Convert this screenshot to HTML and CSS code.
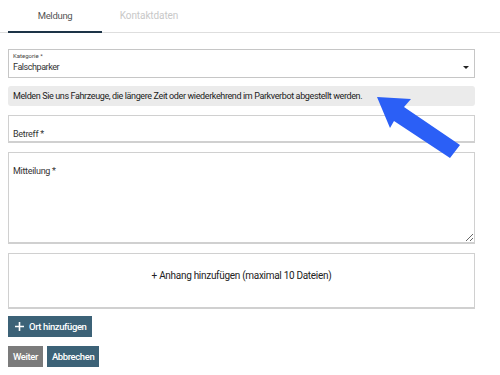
FILE: index.html
```html
<!DOCTYPE html>
<html lang="de">
<head>
<meta charset="utf-8">
<link rel="stylesheet" href="styles.css">
</head>
<body>
<div class="tabs">
  <div class="tab active">Meldung</div>
  <div class="tab disabled">Kontaktdaten</div>
</div>
<form class="form">
  <div class="select">
    <div class="select-label">Kategorie *</div>
    <div class="select-value">Falschparker</div>
    <span class="caret"></span>
  </div>
  <div class="info">Melden Sie uns Fahrzeuge, die längere Zeit oder wiederkehrend im Parkverbot abgestellt werden.</div>
  <div class="field"><span class="field-label">Betreff *</span></div>
  <textarea class="textarea" placeholder="Mitteilung *"></textarea>
  <div class="attach">+ Anhang hinzufügen (maximal 10 Dateien)</div>
  <div class="row row-ort">
    <button type="button" class="btn btn-primary btn-icon"><svg class="plus" width="9" height="9" viewBox="0 0 9 9"><path d="M4.5 0V9M0 4.5H9" stroke="#fff" stroke-width="1.6"/></svg>Ort hinzufügen</button>
  </div>
  <div class="row">
    <button type="button" class="btn btn-grey">Weiter</button>
    <button type="button" class="btn btn-primary">Abbrechen</button>
  </div>
</form>
<svg class="arrow" width="500" height="375" viewBox="0 0 500 375">
  <polygon points="377,97 411,99 404,107 460,145 450,158 394,121 390,128" fill="#2b5ff6"/>
</svg>
</body>
</html>
```

FILE: styles.css
```css
* { box-sizing: border-box; }
html, body { margin: 0; padding: 0; background: #fff; }
body {
  font-family: Roboto, "Liberation Sans", Arial, sans-serif;
  color: #333;
  width: 500px;
  height: 375px;
  overflow: hidden;
  position: relative;
}
.tabs {
  display: flex;
  height: 33px;
  border-bottom: 1px solid #dedede;
  padding-left: 8px;
}
.tab {
  width: 94px;
  text-align: center;
  font-size: 10px;
  line-height: 32px;
  height: 33px;
}
.tab.active {
  color: #555;
  font-size: 9.5px;
  letter-spacing: -0.3px;
  border-bottom: 2px solid #1d3447;
}
.tab.disabled { color: #c8c8c8; letter-spacing: -0.1px; }
.form {
  padding: 16px 25px 0 8px;
  display: flex;
  flex-direction: column;
  gap: 9px;
}
.select {
  position: relative;
  height: 29px;
  border: 1px solid #c6c6c6;
  padding: 2px 4px 0;
}
.select-label { font-size: 6px; line-height: 8px; color: #444; }
.select-value { font-size: 9px; line-height: 14px; color: #333; letter-spacing: -0.45px; }
.caret {
  position: absolute;
  right: 5px;
  top: 16px;
  width: 0; height: 0;
  border-left: 3px solid transparent;
  border-right: 3px solid transparent;
  border-top: 3px solid #222;
}
.info {
  margin-top: -1px;
  background: #ebebeb;
  border-radius: 3px;
  height: 20px;
  line-height: 20px;
  font-size: 9px;
  letter-spacing: -0.38px;
  padding-left: 5px;
  color: #222;
}
.field {
  height: 28px;
  border: 1px solid #d0d0d0;
  border-bottom-width: 2px;
  padding: 12px 4px 0;
  font-size: 9px;
  letter-spacing: -0.3px;
  line-height: 12px;
}
.textarea {
  display: block;
  width: 100%;
  height: 92px;
  border: 1px solid #d0d0d0;
  border-bottom-width: 2px;
  border-radius: 0;
  padding: 12px 4px 0;
  font-family: Roboto, "Liberation Sans", Arial, sans-serif;
  font-size: 9px;
  letter-spacing: -0.3px;
  line-height: 12px;
  margin: 0;
  outline: none;
}
.textarea::placeholder { color: #333; opacity: 1; }
.attach {
  height: 56px;
  border: 1px solid #d0d0d0;
  border-bottom-width: 2px;
  text-align: center;
  line-height: 44px;
  font-size: 10px;
  letter-spacing: -0.3px;
  color: #222;
}
.row { display: flex; gap: 4px; }
.row-ort { margin-top: -2px; }
.btn {
  height: 21px;
  border: 0;
  padding: 0 5px;
  font-family: Roboto, "Liberation Sans", Arial, sans-serif;
  font-size: 9.5px;
  font-weight: 500;
  color: #fff;
  display: flex;
  align-items: center;
  gap: 5px;
  letter-spacing: -0.4px;
}
.btn-icon { padding: 0 5px 0 7px; }
.btn-primary { background: #3c6277; }
.btn-grey { background: #7b7b7b; }
.arrow { position: absolute; left: 0; top: 0; pointer-events: none; }
```
